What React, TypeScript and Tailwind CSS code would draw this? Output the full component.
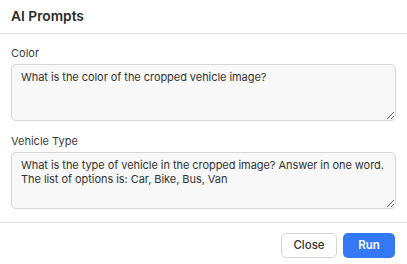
const fieldClass =
  "block w-full h-[57px] rounded-[5px] border border-[#d6d6d6] bg-[#f8f8f8] px-[9px] pt-[6px] pb-[4px] text-[11px] leading-[13.5px] tracking-[-0.005em] text-[#333] outline-none resize-y";

const App = () => {
  return (
    <div className="w-[407px] h-[264px] bg-white font-['Inter',sans-serif] flex flex-col">
      {/* Header */}
      <div className="h-[34px] border-b border-[#e4e4e4] px-[11px] flex items-center">
        <h2 className="text-[13.75px] font-semibold text-[#2b2b2b] leading-none">AI Prompts</h2>
      </div>

      {/* Body */}
      <div className="px-[11px] pt-[11px] pb-[13px] flex flex-col">
        <label className="text-[11px] leading-[16px] text-[#3d3d3d] mb-[3px]">Color</label>
        <textarea
          className={fieldClass}
          defaultValue="What is the color of the cropped vehicle image?"
        />
        <label className="mt-[12px] text-[11px] leading-[16px] text-[#3d3d3d] mb-[3px]">
          Vehicle Type
        </label>
        <textarea
          className={fieldClass}
          defaultValue={
            "What is the type of vehicle in the cropped image? Answer in one word.\nThe list of options is: Car, Bike, Bus, Van"
          }
        />
      </div>

      {/* Footer */}
      <div className="border-t border-[#e4e4e4] px-[12px] pt-[10px] flex justify-end gap-[6px]">
        <button className="h-[25px] w-[56px] rounded-[5px] border border-[#d4d4d4] bg-white text-[11.5px] font-medium text-[#333]">
          Close
        </button>
        <button className="h-[25px] w-[52px] rounded-[5px] bg-[#3478f6] text-[11.5px] font-semibold text-white">
          Run
        </button>
      </div>
    </div>
  );
};

export default App;
